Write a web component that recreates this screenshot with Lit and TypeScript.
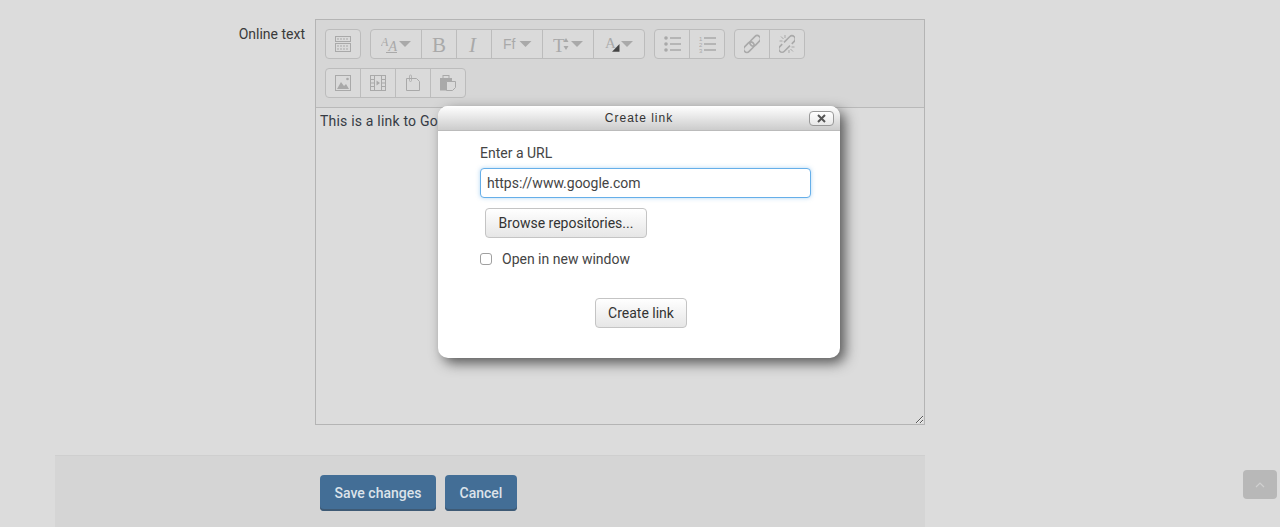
import { LitElement, html, css, svg } from 'lit';
import { customElement } from 'lit/decorators.js';

const ico = (w: number, body: unknown) => html`<svg width=${w} height="20" viewBox="0 0 ${w} 20" fill="none" stroke="#a9a9a9">${body}</svg>`;
// the big serif letters have a line box taller than 20px
const tall = (w: number, body: unknown) => html`<svg width=${w} height="26" viewBox="0 -3 ${w} 26" fill="none" stroke="#a9a9a9">${body}</svg>`;
const caret = (x: number) => svg`<path d="M${x} 7h12l-6 6z" fill="#a9a9a9" stroke="none"/>`;
const txt = (x: number, y: number, size: number, family: string, s: string, style = 'normal') =>
  svg`<text x=${x} y=${y} font-size=${size} font-family=${family} font-style=${style} fill="#a9a9a9" stroke="none">${s}</text>`;

const icons = {
  toggle: ico(16, svg`
    <rect x="0.5" y="2.5" width="15" height="5" /><rect x="0.5" y="9.5" width="15" height="8" />
    <path d="M2 5h12M2 12h12M2 15h12" stroke-dasharray="2 1" />`),
  size: ico(31, svg`
    ${txt(0, 12, 12, 'Liberation Serif', 'A', 'italic')}
    ${txt(7.5, 17, 14, 'Liberation Serif', 'A', 'italic')}
    <path d="M5 18.500h11" />${caret(18)}`),
  bold: tall(16, txt(1, 18, 21, 'Liberation Serif', 'B')),
  italic: tall(14, txt(2, 18, 21, 'Liberation Serif', 'I', 'italic')),
  font: ico(29, svg`${txt(0, 15, 14, 'Liberation Sans', 'Ff')}${caret(16.5)}`),
  height: ico(30, svg`
    ${txt(0, 17.500, 19, 'Liberation Serif', 'T')}
    <path d="M10.500 8l2.500-4 2.500 4zM10.500 12l2.500 4 2.500-4z" fill="#a9a9a9" stroke="none" />${caret(18)}`),
  color: ico(29, svg`
    ${txt(0, 14, 15, 'Liberation Serif', 'A')}
    <path d="M7 17.700l7.500-7.700v7.700z" fill="#444" stroke="none" />${caret(16)}`),
  bullets: ico(17, svg`
    <circle cx="2" cy="4" r="1.800" fill="#a9a9a9" stroke="none" />
    <circle cx="2" cy="10" r="1.800" fill="#a9a9a9" stroke="none" />
    <circle cx="2" cy="16" r="1.800" fill="#a9a9a9" stroke="none" />
    <path d="M6 4h11M6 10h11M6 16h11" stroke-width="1.600" />`),
  numbers: ico(17, svg`
    ${txt(0, 7, 6, 'Liberation Sans', '1')}
    ${txt(0, 13, 6, 'Liberation Sans', '2')}
    ${txt(0, 19, 6, 'Liberation Sans', '3')}
    <path d="M5 4h12M5 10h12M5 16h12" stroke-width="1.600" />`),
  link: ico(16, svg`
    <g stroke-width="1.600" transform="rotate(-45 8 10)">
      <rect x="-2.500" y="6.750" width="12" height="6.500" rx="3.250" />
      <rect x="6.500" y="6.750" width="12" height="6.500" rx="3.250" />
    </g>`),
  unlink: ico(16, svg`
    <g stroke-width="1.600" transform="rotate(-45 8 10)">
      <path d="M4.500 6.750h-3.500a3.250 3.250 0 0 0 0 6.500h8" />
      <path d="M11.500 13.250h3.500a3.250 3.250 0 0 0 0-6.500h-8" />
    </g>
    <path d="M0.500 7h3M2 2.500l2.500 2.500M6 1v3M15.500 13h-3M14 17.500l-2.500-2.500M10 19v-3" />`),
  image: ico(16, svg`
    <rect x="0.500" y="2.500" width="15" height="15" />
    <path d="M2 16l4-7 3 4 2-2 3 5z" fill="#a9a9a9" stroke="none" />
    <circle cx="12.500" cy="6" r="1.300" fill="#a9a9a9" stroke="none" />`),
  video: ico(16, svg`
    <rect x="0.500" y="2.500" width="15" height="15" />
    <path d="M4.500 2.500v15M11.500 2.500v15M0.500 6.500h4M0.500 10h4M0.500 13.500h4M11.500 6.500h4M11.500 10h4M11.500 13.500h4" />
    <path d="M6.500 7.500l3.500 2.500-3.500 2.500z" fill="#a9a9a9" stroke="none" />`),
  file: ico(14, svg`
    <path d="M0.500 5.500v12h13v-9l-3-3z" />
    <path d="M3.500 5v2.500a1 1 0 0 0 2 0v-4.500a1 1 0 0 0-2 0v2" stroke-width="0.800" />`),
  paste: ico(16, svg`
    <path d="M0 5h12v12.500h-12z" fill="#a9a9a9" stroke="none" />
    <rect x="3" y="2.500" width="6" height="3" fill="#dadada" stroke="#a9a9a9" />
    <path d="M6.500 8.500h9v6l-3 3h-6z" fill="#dadada" />`),
};

@customElement('app-root')
export class AppRoot extends LitElement {
  static styles = css`
    :host {
      display: block;
      height: 527px;
      overflow: hidden;
      position: relative;
      background: #dcdcdc;
      color: #3a3a3a;
      font-family: Roboto, 'Liberation Sans', sans-serif;
      font-size: 14px;
    }

    .page {
      width: 870px;
      margin-left: 55px;
      padding-top: 19px;
    }

    .field {
      display: flex;
      gap: 10px;
    }

    .field-label {
      width: 250px;
      text-align: right;
      line-height: 20px;
      padding-top: 5px;
    }

    .editor {
      width: 610px;
      height: 406px;
      box-sizing: border-box;
      border: 1px solid #b4b4b4;
      display: flex;
      flex-direction: column;
    }

    .toolbar {
      height: 88px;
      flex: none;
      box-sizing: border-box;
      padding: 9px 9px 0;
      background: #d6d6d6;
      border-bottom: 1px solid #b9b9b9;
      display: flex;
      flex-direction: column;
      gap: 9px;
    }

    .row {
      display: flex;
      gap: 9px;
    }

    .group {
      display: flex;
      height: 30px;
      box-sizing: border-box;
      border: 1px solid #bcbcbc;
      border-radius: 4px;
      background: #dadada;
    }

    .tb {
      display: flex;
      align-items: center;
      justify-content: center;
      border-left: 1px solid #bcbcbc;
      box-sizing: border-box;
    }

    .tb:first-child {
      border-left: 0;
    }

    .content {
      flex: 1;
      padding: 3px 4px;
      line-height: 20px;
      letter-spacing: 0.2px;
      overflow: auto;
      resize: vertical;
      color: #363b45;
    }

    .actions {
      margin-top: 30px;
      height: 72px;
      box-sizing: border-box;
      border-top: 1px solid #cfcfcf;
      background: #d5d5d5;
      padding: 19px 0 0 265px;
      display: flex;
      gap: 9px;
      align-items: flex-start;
    }

    .primary {
      height: 36px;
      box-sizing: border-box;
      border: 0;
      box-shadow: inset 0 -2px 0 #3e5a75;
      border-radius: 4px;
      background: #436e96;
      color: #dce3ea;
      font: 500 14px Roboto, sans-serif;
      padding: 0;
    }

    .save {
      width: 116px;
    }

    .cancel {
      width: 72px;
    }

    .dialog {
      position: absolute;
      left: 438px;
      top: 106px;
      width: 402px;
      height: 252px;
      box-sizing: border-box;
      border-radius: 10px;
      background: #fff;
      box-shadow: 5px 5px 13px #555;
    }

    .dialog-head {
      height: 25px;
      box-sizing: border-box;
      border-bottom: 1px solid #bbb;
      border-radius: 10px 10px 0 0;
      background: linear-gradient(#fff, #ccc);
      display: flex;
      align-items: center;
      justify-content: center;
      position: relative;
      font: 12px 'Liberation Sans', sans-serif;
      letter-spacing: 1px;
      color: #333;
    }

    .close {
      position: absolute;
      right: 6px;
      top: 5px;
      width: 25px;
      height: 15px;
      box-sizing: border-box;
      border: 1px solid #999;
      border-radius: 4px;
      background: linear-gradient(#fff, #e8e8e8);
      display: flex;
      align-items: center;
      justify-content: center;
      padding: 0;
    }

    .dialog-body {
      padding: 12px 29px 0 42px;
      display: flex;
      flex-direction: column;
    }

    .dialog-body label {
      line-height: 20px;
      color: #444;
    }

    .url {
      margin-top: 5px;
      height: 30px;
      box-sizing: border-box;
      border: 1px solid #66afe9;
      border-radius: 4px;
      box-shadow: 0 0 4px rgba(102, 175, 233, 0.5);
      padding: 0 6px;
      font: 14px Roboto, sans-serif;
      color: #444;
      outline: 0;
    }

    .btn {
      box-sizing: border-box;
      height: 30px;
      border: 1px solid #c4c4c4;
      border-radius: 4px;
      background: linear-gradient(#fff, #e6e6e6);
      font: 14px Roboto, sans-serif;
      color: #333;
      padding: 0;
    }

    .browse {
      margin: 10px 0 0 5px;
      width: 162px;
    }

    .newwin {
      margin-top: 11px;
      height: 20px;
      display: flex;
      align-items: center;
      gap: 10px;
      color: #444;
    }

    .newwin input {
      width: 12px;
      height: 12px;
      margin: 0;
      appearance: none;
      border: 1px solid #a0a0a0;
      border-radius: 3px;
      background: #fff;
    }

    .submit {
      margin: 29px 0 0 115px;
      width: 92px;
    }

    .to-top {
      position: fixed;
      left: 1243px;
      top: 470px;
      width: 34px;
      height: 29px;
      border-radius: 4px;
      background: #b8b8b8;
      display: flex;
      align-items: center;
      justify-content: center;
    }
  `;

  private tb(width: number, icon: unknown) {
    return html`<div class="tb" style="width:${width}px">${icon}</div>`;
  }

  render() {
    return html`
      <div class="page">
        <div class="field">
          <div class="field-label">Online text</div>
          <div class="editor">
            <div class="toolbar">
              <div class="row">
                <div class="group">${this.tb(34, icons.toggle)}</div>
                <div class="group">
                  ${this.tb(50, icons.size)}${this.tb(35, icons.bold)}${this.tb(35, icons.italic)}
                  ${this.tb(51, icons.font)}${this.tb(51, icons.height)}${this.tb(51, icons.color)}
                </div>
                <div class="group">${this.tb(34, icons.bullets)}${this.tb(35, icons.numbers)}</div>
                <div class="group">${this.tb(34, icons.link)}${this.tb(35, icons.unlink)}</div>
              </div>
              <div class="row">
                <div class="group">
                  ${this.tb(34, icons.image)}${this.tb(35, icons.video)}${this.tb(35, icons.file)}${this.tb(35, icons.paste)}
                </div>
              </div>
            </div>
            <div class="content">This is a link to Google</div>
          </div>
        </div>
        <div class="actions">
          <button class="primary save">Save changes</button>
          <button class="primary cancel">Cancel</button>
        </div>
      </div>

      <div class="dialog">
        <div class="dialog-head">
          Create link
          <button class="close" aria-label="Close">
            <svg width="9" height="9" viewBox="0 0 9 9"><path d="M1 1l7 7M8 1l-7 7" stroke="#555" stroke-width="2" /></svg>
          </button>
        </div>
        <div class="dialog-body">
          <label>Enter a URL</label>
          <input class="url" type="text" .value=${'https://www.google.com'} />
          <button class="btn browse">Browse repositories...</button>
          <div class="newwin"><input type="checkbox" /><span>Open in new window</span></div>
          <button class="btn submit">Create link</button>
        </div>
      </div>

      <div class="to-top">
        <svg width="10" height="6" viewBox="0 0 10 6" fill="none"><path d="M1 5l4-4 4 4" stroke="#d0d0d0" stroke-width="1.200" /></svg>
      </div>
    `;
  }
}
